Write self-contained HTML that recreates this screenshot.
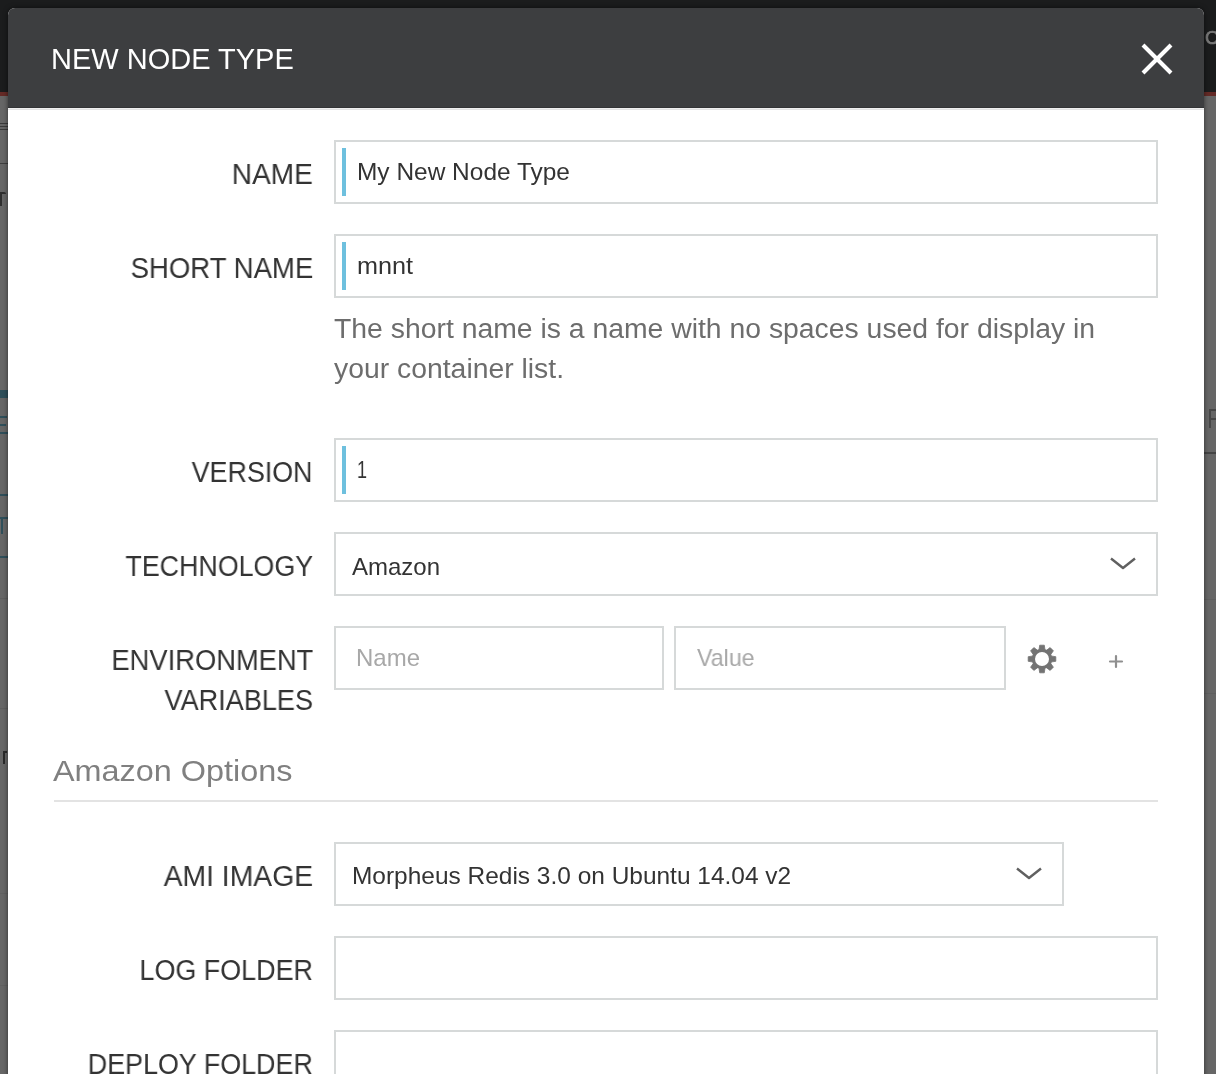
<!DOCTYPE html>
<html><head><meta charset="utf-8">
<style>
html,body{margin:0;padding:0;}
body{width:1216px;height:1074px;overflow:hidden;position:relative;background:#666666;font-family:"Liberation Sans",sans-serif;}
.abs{position:absolute;}
#topbar{left:0;top:0;width:1216px;height:92px;background:#1b1c1d;}
#redline{left:0;top:92px;width:1216px;height:4px;background:#642a26;}
#modal{left:8px;top:8px;width:1196px;height:1100px;background:#fff;border-radius:7px 7px 0 0;overflow:hidden;box-shadow:0 0 5px rgba(0,0,0,0.55);}
#header{left:0;top:0;width:1196px;height:100px;background:#3d3e40;}
#hline1{left:0;top:99px;width:1196px;height:1px;background:#333436;}
#hline2{left:0;top:100px;width:1196px;height:1px;background:#efefef;}
#hline3{left:0;top:101px;width:1196px;height:1px;background:#e3e3e3;}
.t{position:absolute;white-space:pre;line-height:1;transform-origin:0 50%;will-change:transform;}
.lbl{color:#333;font-size:29px;text-align:right;right:903px;transform-origin:100% 50%;}
.inp{position:absolute;box-sizing:border-box;border:2px solid #d6d9d9;background:#fff;height:64px;}
.bar{position:absolute;left:6px;top:6px;width:4px;height:48px;background:#6ec0de;}
.val{color:#333;font-size:24px;}
</style></head>
<body>
<div id="topbar" class="abs"></div>
<div id="redline" class="abs"></div>
<!-- background page details -->
<div class="t" style="left:1205px;top:28px;color:#7a7a7a;font-size:19px;-webkit-text-stroke:0.7px #7a7a7a;">C</div>
<div class="abs" style="left:0;top:123px;width:8px;height:1px;background:#3a3a3a;"></div>
<div class="abs" style="left:0;top:126px;width:8px;height:1px;background:#3a3a3a;"></div>
<div class="abs" style="left:0;top:129px;width:8px;height:1px;background:#3a3a3a;"></div>
<div class="abs" style="left:0;top:163px;width:8px;height:1px;background:#3f3f3f;"></div>
<div class="abs" style="left:0;top:192px;width:2px;height:14px;background:#2e2e2e;"></div>
<div class="abs" style="left:1px;top:192px;width:5px;height:2px;background:#2e2e2e;border-radius:0 2px 0 0;"></div>
<div class="abs" style="left:0;top:390px;width:8px;height:8px;background:#2f4f5a;"></div>
<div class="abs" style="left:0;top:416px;width:7px;height:2px;background:#2f4f5a;"></div>
<div class="abs" style="left:0;top:424px;width:6px;height:2px;background:#2f4f5a;"></div>
<div class="abs" style="left:0;top:432px;width:8px;height:2px;background:#2f4f5a;"></div>
<div class="abs" style="left:0;top:494px;width:8px;height:2px;background:#2f4f5a;"></div>
<div class="abs" style="left:0;top:517px;width:8px;height:2px;background:#2f4f5a;"></div>
<div class="abs" style="left:1px;top:518px;width:2px;height:16px;background:#2f4f5a;"></div>
<div class="abs" style="left:0;top:556px;width:8px;height:2px;background:#2f4f5a;"></div>
<div class="abs" style="left:0;top:598px;width:8px;height:1px;background:#5e5e5e;"></div>
<div class="abs" style="left:0;top:708px;width:8px;height:1px;background:#5e5e5e;"></div>
<div class="abs" style="left:3px;top:751px;width:2px;height:13px;background:#2a2a2a;"></div>
<div class="abs" style="left:4px;top:751px;width:3px;height:2px;background:#2a2a2a;"></div>
<div class="abs" style="left:0;top:893px;width:8px;height:1px;background:#606060;"></div>
<div class="abs" style="left:0;top:985px;width:8px;height:1px;background:#606060;"></div>
<div class="abs" style="left:1209px;top:409px;width:2px;height:19px;background:#474747;"></div>
<div class="abs" style="left:1209px;top:409px;width:7px;height:2px;background:#474747;"></div>
<div class="abs" style="left:1209px;top:418px;width:7px;height:2px;background:#474747;"></div>
<div class="abs" style="left:1204px;top:452px;width:12px;height:2px;background:#454545;"></div>
<div class="abs" style="left:1204px;top:599px;width:12px;height:1px;background:#5f5f5f;"></div>
<div class="abs" style="left:1204px;top:693px;width:12px;height:1px;background:#5f5f5f;"></div>

<div id="modal" class="abs">
  <div id="header" class="abs"></div>
  <div id="hline1" class="abs"></div>
  <div id="hline2" class="abs"></div>
  <div id="hline3" class="abs"></div>
</div>

<!-- header -->
<div class="t m" style="left:51px;top:45px;color:#fff;font-size:29px;">NEW NODE TYPE</div>
<svg class="abs" style="left:1137px;top:39px" width="40" height="40" viewBox="1137 39 40 40">
  <line x1="1143" y1="45" x2="1171" y2="73" stroke="#fff" stroke-width="4"/>
  <line x1="1171" y1="45" x2="1143" y2="73" stroke="#fff" stroke-width="4"/>
</svg>

<!-- NAME -->
<div class="t lbl m" style="top:160px;transform:scaleX(0.967);">NAME</div>
<div class="inp" style="left:334px;top:140px;width:824px;"><div class="bar"></div></div>
<div class="t val m" style="left:357px;top:160px;transform:scaleX(1.019);">My New Node Type</div>

<!-- SHORT NAME -->
<div class="t lbl m" style="top:254px;transform:scaleX(0.950);">SHORT NAME</div>
<div class="inp" style="left:334px;top:234px;width:824px;"><div class="bar"></div></div>
<div class="t val m" style="left:357px;top:254px;transform:scaleX(1.05);">mnnt</div>
<div class="t m" style="left:334px;top:309px;color:#6d6d6d;font-size:27px;line-height:40px;transform:scaleX(1.05);">The short name is a name with no spaces used for display in
your container list.</div>

<!-- VERSION -->
<div class="t lbl m" style="top:458px;transform:scaleX(0.926);">VERSION</div>
<div class="inp" style="left:334px;top:438px;width:824px;"><div class="bar"></div></div>
<div class="t val m" style="left:357px;top:458px;transform:scaleX(0.75);">1</div>

<!-- TECHNOLOGY -->
<div class="t lbl m" style="top:552px;transform:scaleX(0.924);">TECHNOLOGY</div>
<div class="inp" style="left:334px;top:532px;width:824px;"></div>
<div class="t val m" style="left:352px;top:555px;">Amazon</div>
<svg class="abs" style="left:1100px;top:550px" width="50" height="30" viewBox="1100 550 50 30">
  <polyline points="1111,558.5 1123,568 1135,558.5" fill="none" stroke="#606060" stroke-width="2.4" stroke-linejoin="round"/>
</svg>

<!-- ENV -->
<div class="t lbl m" style="top:646px;transform:scaleX(0.942);">ENVIRONMENT</div>
<div class="t lbl m" style="top:686px;transform:scaleX(0.934);">VARIABLES</div>
<div class="inp" style="left:334px;top:626px;width:330px;"></div>
<div class="inp" style="left:674px;top:626px;width:332px;"></div>
<div class="t m" style="left:356px;top:646px;color:#a8a8a8;font-size:24px;">Name</div>
<div class="t m" style="left:697px;top:646px;color:#a8a8a8;font-size:24px;transform:scaleX(0.966);">Value</div>
<svg class="abs" style="left:1026px;top:643px" width="32" height="32" viewBox="-16 -16 32 32">
  <defs><path id="tooth" d="M-2.3,-13.8 L2.3,-13.8 L3.1,-8.5 L-3.1,-8.5 Z"/></defs>
  <g fill="#737373" stroke="#737373" stroke-width="0.8" stroke-linejoin="round">
    <circle r="10.2" stroke="none"/>
    <use href="#tooth"/>
    <use href="#tooth" transform="rotate(45)"/>
    <use href="#tooth" transform="rotate(90)"/>
    <use href="#tooth" transform="rotate(135)"/>
    <use href="#tooth" transform="rotate(180)"/>
    <use href="#tooth" transform="rotate(225)"/>
    <use href="#tooth" transform="rotate(270)"/>
    <use href="#tooth" transform="rotate(315)"/>
  </g>
  <circle r="7" fill="#fff"/>
</svg>
<svg class="abs" style="left:1106px;top:651px" width="20" height="20" viewBox="1106 651 20 20">
  <path d="M1110 661.5 H1122 M1116 656 V667" stroke="#8f8f8f" stroke-width="2.2" stroke-linecap="round" fill="none"/>
</svg>

<!-- Amazon Options -->
<div class="t m" style="left:53px;top:756px;color:#808080;font-size:30px;transform:scaleX(1.08);">Amazon Options</div>
<div class="abs" style="left:54px;top:800px;width:1104px;height:2px;background:#e3e3e3;"></div>

<!-- AMI IMAGE -->
<div class="t lbl m" style="top:862px;transform:scaleX(0.976);">AMI IMAGE</div>
<div class="inp" style="left:334px;top:842px;width:730px;"></div>
<div class="t val m" style="left:352px;top:864px;transform:scaleX(1.019);">Morpheus Redis 3.0 on Ubuntu 14.04 v2</div>
<svg class="abs" style="left:1006px;top:860px" width="50" height="30" viewBox="1006 860 50 30">
  <polyline points="1017,868.5 1029,878 1041,868.5" fill="none" stroke="#606060" stroke-width="2.4" stroke-linejoin="round"/>
</svg>

<!-- LOG FOLDER -->
<div class="t lbl m" style="top:956px;transform:scaleX(0.928);">LOG FOLDER</div>
<div class="inp" style="left:334px;top:936px;width:824px;"></div>

<!-- DEPLOY FOLDER -->
<div class="t lbl m" style="top:1050px;transform:scaleX(0.927);">DEPLOY FOLDER</div>
<div class="inp" style="left:334px;top:1030px;width:824px;"></div>

</body></html>
